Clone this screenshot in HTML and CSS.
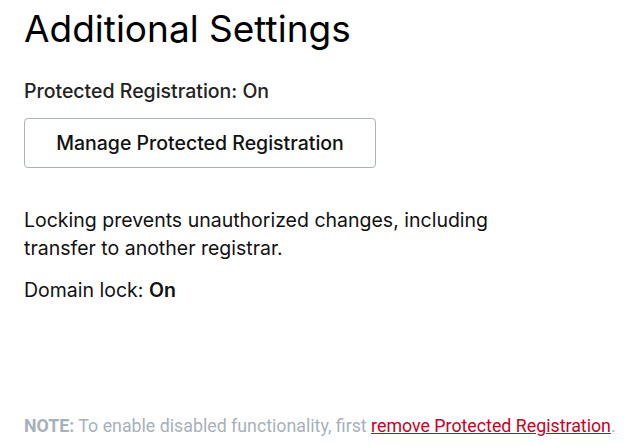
FILE: index.html
```html
<!DOCTYPE html>
<html>
<head>
<meta charset="utf-8">
<link rel="stylesheet" href="styles.css">
</head>
<body>
<main class="page">
  <h1 class="title">Additional Settings</h1>
  <section class="protect">
    <p class="status">Protected Registration: On</p>
    <button class="btn">Manage Protected Registration</button>
  </section>
  <section class="lock">
    <p class="desc">Locking prevents unauthorized changes, including<br>transfer to another registrar.</p>
    <p class="lock-status">Domain lock: <strong>On</strong></p>
  </section>
  <p class="note"><strong>NOTE:</strong> To enable disabled functionality, first <a href="#" class="link">remove Protected Registration</a>.</p>
</main>
</body>
</html>
```
FILE: styles.css
```css
html, body { margin: 0; padding: 0; background: #fff; }
.page {
  padding: 0 0 0 24px;
  font-family: "Inter", sans-serif;
  color: #111;
  display: flex;
  flex-direction: column;
}
.title {
  margin: 7px 0 0;
  font-size: 37px;
  font-weight: 400;
  line-height: 44px;
  color: #000;
}
.protect { margin-top: 28px; display: flex; flex-direction: column; align-items: flex-start; }
.status { margin: 0; font-size: 19.5px; font-weight: 500; line-height: 24px; color: #222; }
.btn {
  margin-top: 15px;
  width: 352px;
  height: 50px;
  border: 1px solid #a9b3bd;
  border-radius: 4px;
  background: #fff;
  font-family: inherit;
  font-size: 19.5px;
  font-weight: 500;
  color: #111;
}
.lock { margin-top: 38px; }
.desc { margin: 0; font-size: 19.5px; line-height: 28px; color: #111; }
.lock-status { margin: 14px 0 0; font-size: 19.5px; line-height: 28px; }
.lock-status strong { font-weight: 600; }
.note {
  margin: 112px 0 0;
  font-family: "Roboto", sans-serif;
  font-size: 17.8px;
  line-height: 20px;
  color: #a7b1bb;
  white-space: nowrap;
}
.note strong { font-weight: 700; }
.link { color: #c8001c; text-decoration: underline; }
```
